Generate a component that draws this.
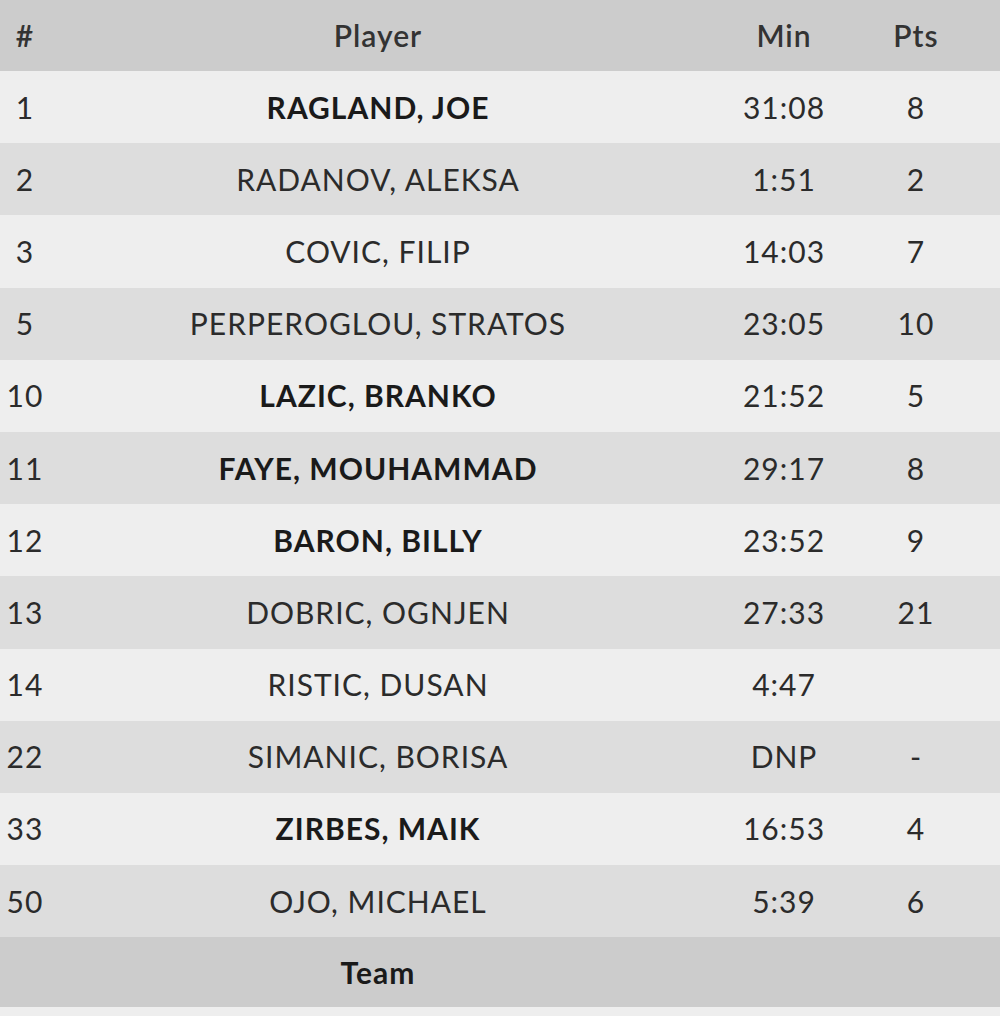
import React from "react";

const PLAYERS = [
  { no: "1", name: "RAGLAND, JOE", min: "31:08", pts: "8", starter: true },
  { no: "2", name: "RADANOV, ALEKSA", min: "1:51", pts: "2" },
  { no: "3", name: "COVIC, FILIP", min: "14:03", pts: "7" },
  { no: "5", name: "PERPEROGLOU, STRATOS", min: "23:05", pts: "10" },
  { no: "10", name: "LAZIC, BRANKO", min: "21:52", pts: "5", starter: true },
  { no: "11", name: "FAYE, MOUHAMMAD", min: "29:17", pts: "8", starter: true },
  { no: "12", name: "BARON, BILLY", min: "23:52", pts: "9", starter: true },
  { no: "13", name: "DOBRIC, OGNJEN", min: "27:33", pts: "21" },
  { no: "14", name: "RISTIC, DUSAN", min: "4:47", pts: "" },
  { no: "22", name: "SIMANIC, BORISA", min: "DNP", pts: "-" },
  { no: "33", name: "ZIRBES, MAIK", min: "16:53", pts: "4", starter: true },
  { no: "50", name: "OJO, MICHAEL", min: "5:39", pts: "6" },
];

const COLS = "grid grid-cols-[50px_656px_156px_108px_30px] items-center text-center";

export default function App() {
  return (
    <div
      className="w-[1000px] h-[1016px] bg-[#eeeeee] text-[#2b2b2b] text-[30px] tracking-[1px] overflow-hidden"
      style={{ fontFamily: "Lato, 'Open Sans', sans-serif" }}
    >
      {/* HEADER */}
      <div className={`${COLS} h-[71px] bg-[#cccccc] font-semibold text-[#333333]`}>
        <div>#</div>
        <div>Player</div>
        <div>Min</div>
        <div>Pts</div>
        <div />
      </div>

      {/* ROWS */}
      {PLAYERS.map((p, i) => (
        <div
          key={p.no}
          className={`${COLS} h-[72.2px] ${i % 2 === 0 ? "bg-[#eeeeee]" : "bg-[#dddddd]"}`}
        >
          <div>{p.no}</div>
          <div className={p.starter ? "font-bold text-[#1a1a1a]" : ""}>{p.name}</div>
          <div>{p.min}</div>
          <div>{p.pts}</div>
          <div />
        </div>
      ))}

      {/* TEAM */}
      <div className={`${COLS} h-[70px] bg-[#cccccc] font-bold text-[#1a1a1a]`}>
        <div />
        <div>Team</div>
        <div />
        <div />
        <div />
      </div>
    </div>
  );
}
